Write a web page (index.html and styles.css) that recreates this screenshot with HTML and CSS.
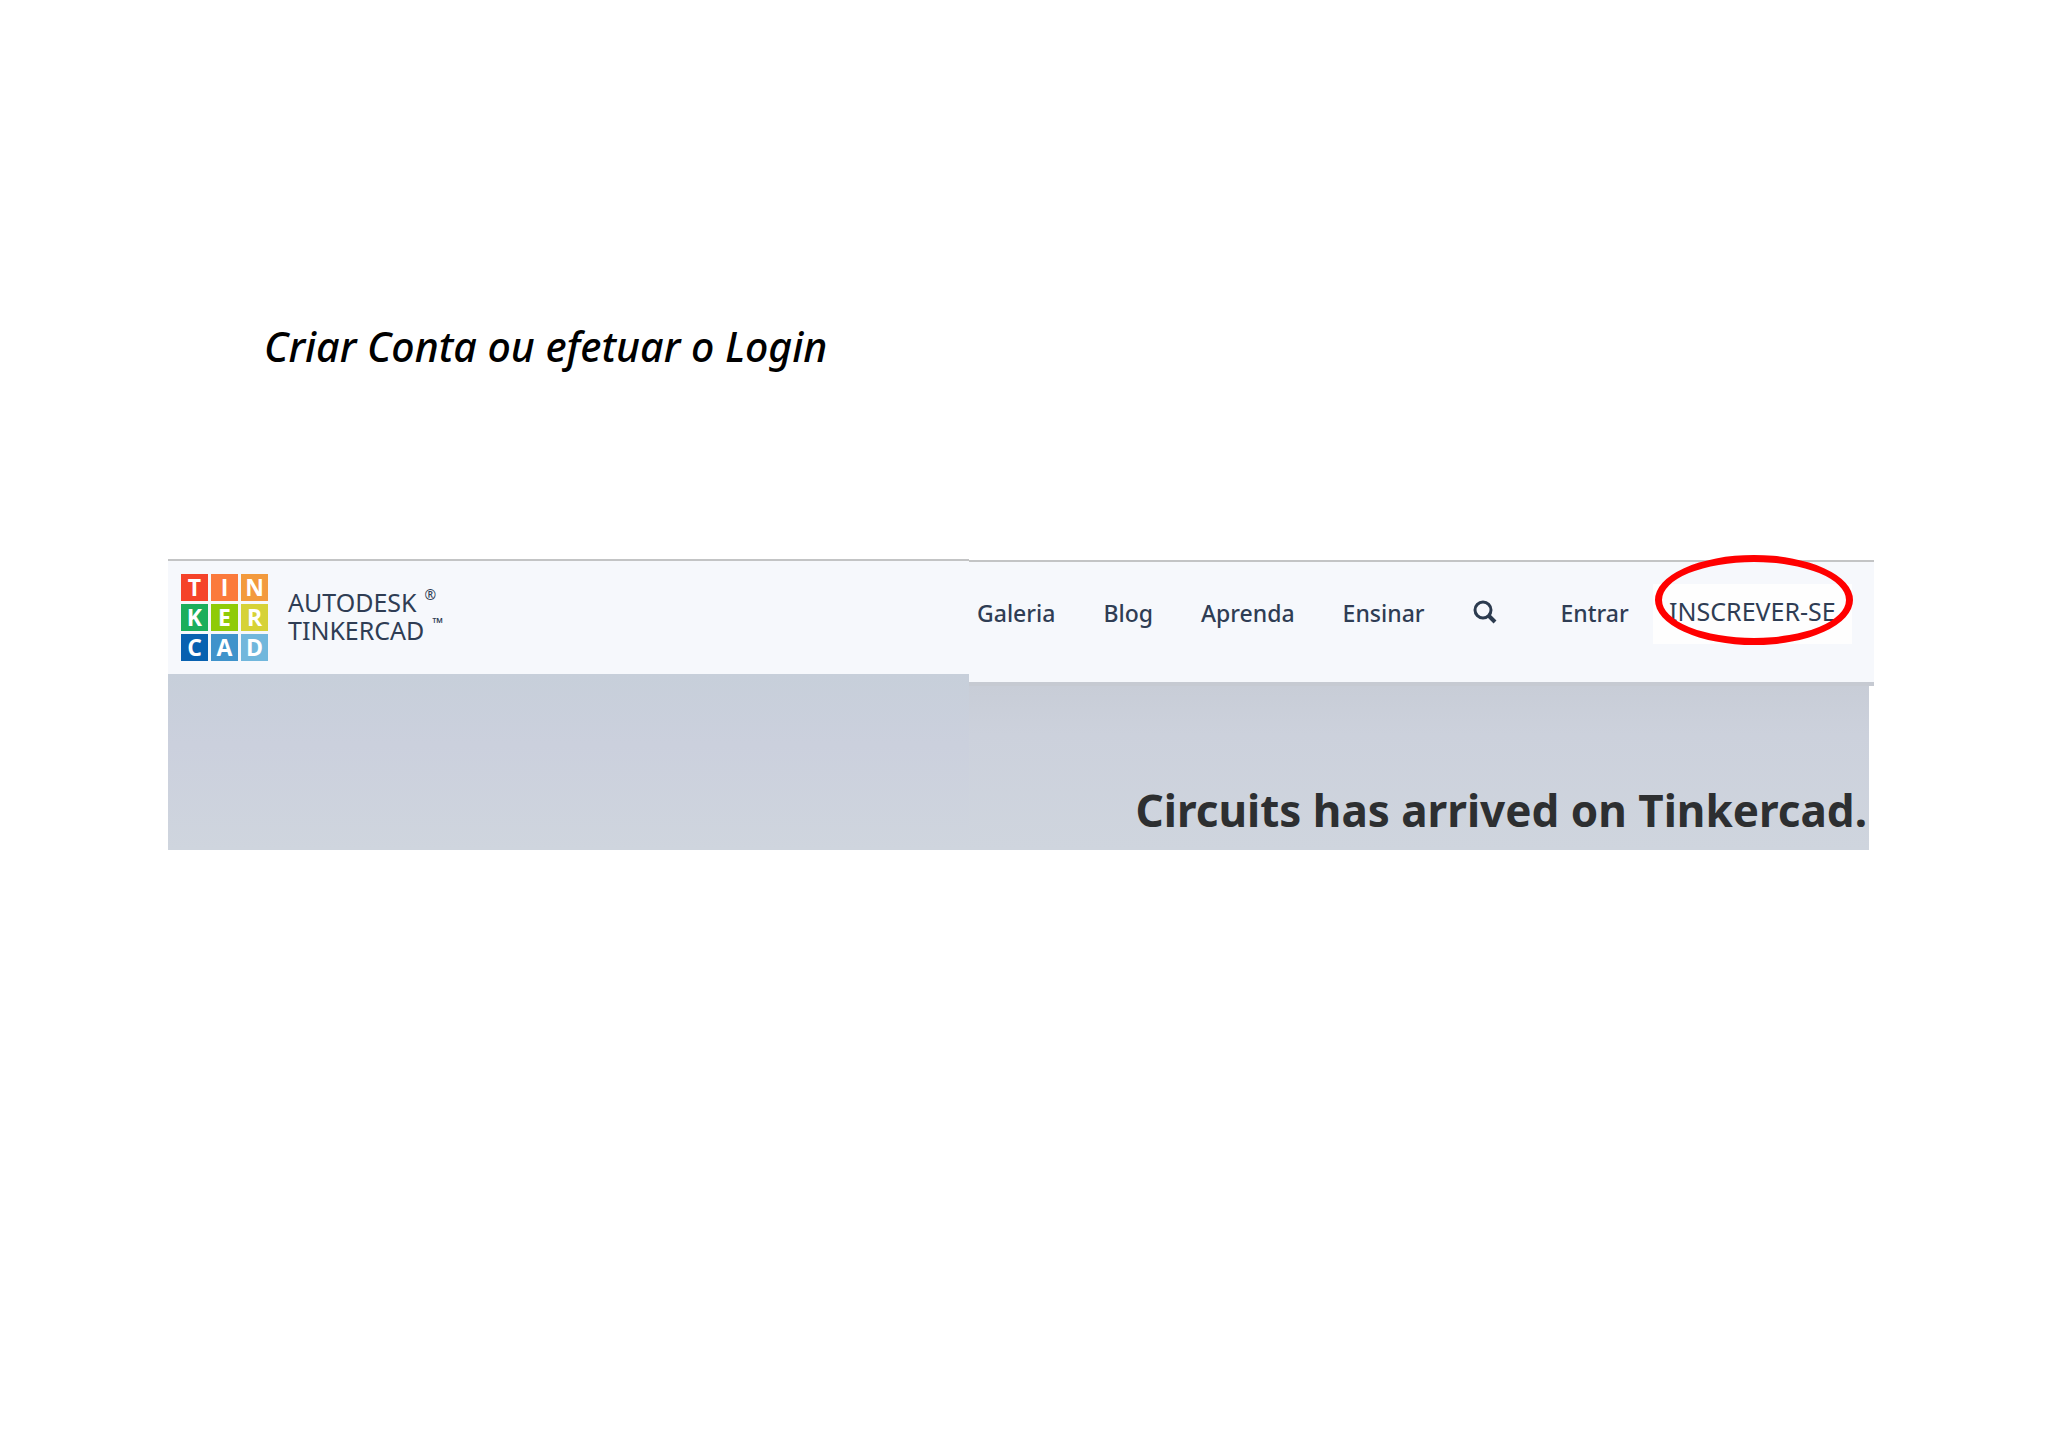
FILE: index.html
```
<!DOCTYPE html>
<html lang="pt-BR">
<head>
	<meta charset="UTF-8">
	<meta name="viewport" content="width=device-width, initial-scale=1.0">
	<title>Criar Conta ou efetuar o Login</title>
	<link rel="stylesheet" href="styles.css">
</head>
<body>
	<h1 class="title">Criar Conta ou efetuar o Login</h1>

	<div class="banner">
		<div class="side side-left">
			<header class="bar bar-left">
				<a href="#" class="brand">
					<span class="logo" aria-hidden="true">
						<span class="tile red">T</span>
						<span class="tile coral">I</span>
						<span class="tile orange">N</span>
						<span class="tile green">K</span>
						<span class="tile lime">E</span>
						<span class="tile yellow">R</span>
						<span class="tile navy">C</span>
						<span class="tile blue">A</span>
						<span class="tile sky">D</span>
					</span>
					<span class="brand-name">
						<span class="brand-line">AUTODESK <small class="mark">®</small></span>
						<span class="brand-line">TINKERCAD <small class="mark">™</small></span>
					</span>
				</a>
			</header>
			<div class="hero hero-left"></div>
		</div>

		<div class="side side-right">
			<nav class="bar bar-right">
				<a href="#" class="link">Galeria</a>
				<a href="#" class="link">Blog</a>
				<a href="#" class="link">Aprenda</a>
				<a href="#" class="link">Ensinar</a>
				<button type="button" class="search" aria-label="Buscar">
					<svg width="24" height="24" viewBox="0 0 24 24" fill="none" stroke="#2c3b4f">
						<circle cx="10" cy="10" r="8" stroke-width="3"/>
						<path d="M15 15L22 22" stroke-width="4"/>
					</svg>
				</button>
				<a href="#" class="link">Entrar</a>
				<a href="#" class="signup">INSCREVER-SE</a>
			</nav>
			<div class="hero hero-right">
				<h2 class="headline">Circuits has arrived on Tinkercad.</h2>
			</div>
		</div>
	</div>
</body>
</html>
```
FILE: styles.css
```
*,
*::before,
*::after {
	box-sizing: border-box;
	padding: 0;
	margin: 0;
}
body {
	padding: 320px 174px 40px 168px;
	background: #fff;
	font-family: "Noto Sans", sans-serif;
}
a {
	color: inherit;
	text-decoration: none;
}

.title {
	padding-left: 96px;
	margin-bottom: 187px;
	font-size: 41px;
	line-height: 52px;
	font-weight: 500;
	font-style: italic;
	color: #000;
}

.banner {
	display: flex;
	color: #2f3d54;
}
.side {
	display: flex;
	flex-direction: column;
}
.side-left {
	flex: 801;
}
.side-right {
	flex: 905;
	padding-top: 1px;
}

.bar {
	display: flex;
	border-top: 2px solid #c3c4c5;
	background: #f6f8fc;
}
.bar-left {
	padding: 13px;
}

/* logo */
.brand {
	display: flex;
	gap: 20px;
}
.logo {
	display: grid;
	grid-template-columns: repeat(3, 27px);
	grid-auto-rows: 27px;
	gap: 3px;
}
.tile {
	font-family: "Open Sans", sans-serif;
	font-size: 23px;
	line-height: 27px;
	font-weight: 700;
	text-align: center;
	color: #fff;
}
.red { background: #f5432a; }
.coral { background: #fb7a3c; }
.orange { background: #f39a3d; }
.green { background: #1bae5c; }
.lime { background: #8fcb08; }
.yellow { background: #d6d237; }
.navy { background: #0861b0; }
.blue { background: #3f93cb; }
.sky { background: #71b7dc; }

.brand-name {
	display: flex;
	flex-direction: column;
	padding-top: 14px;
	font-size: 25px;
	line-height: 28px;
}
.brand-line {
	display: flex;
	gap: 8px;
}
.mark {
	font-size: 14px;
	line-height: 14px;
}

/* menu */
.bar-right {
	align-items: center;
	gap: 48px;
	padding: 22px 22px 38px 8px;
	border-bottom: 4px solid #c6cad2;
	white-space: nowrap;
}
.link {
	padding-bottom: 2px;
	font-size: 23px;
	line-height: 32px;
	font-weight: 500;
}
.search {
	display: flex;
	margin-right: 16px;
	padding-bottom: 4px;
	border: none;
	background: none;
}
.signup {
	position: relative;
	margin-left: -24px;
	flex: 1;
	padding: 11px 0 17px;
	background: #fefefe;
	font-size: 25px;
	line-height: 32px;
	text-align: center;
}
/* red ring around the sign-up link */
.signup::after {
	content: "";
	position: absolute;
	inset: -29px -1px -1px 2px;
	border: 7px solid #f00;
	border-radius: 50%;
}

.hero {
	flex: 1;
}
.hero-left {
	background: linear-gradient(#c7cfda, #cbd0dd 40%, #cfd5de);
}
.hero-right {
	margin-right: 5px;
	padding: 94px 2px 10px;
	background: linear-gradient(#c8cdd7, #ccd1dc 30%, #cfd5de);
}
.headline {
	font-size: 44px;
	line-height: 60px;
	font-weight: 700;
	text-align: right;
	color: #2d2f31;
}
```
